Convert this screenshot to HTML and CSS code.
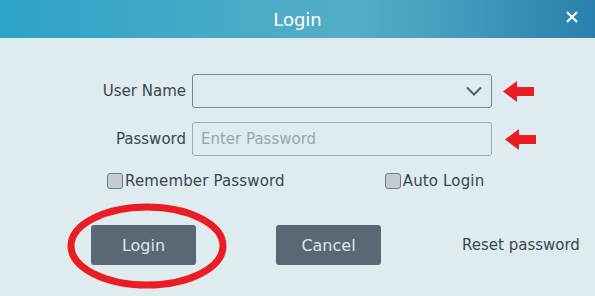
FILE: index.html
```html
<!DOCTYPE html>
<html>
<head>
<meta charset="utf-8">
<link rel="stylesheet" href="styles.css">
</head>
<body>
<div class="dialog">
  <header class="titlebar">
    <span class="title">Login</span>
    <span class="close">
      <svg width="12" height="12" viewBox="0 0 12 12"><path d="M1 1L11 11M11 1L1 11" stroke="#fff" stroke-width="2"/></svg>
    </span>
  </header>
  <main class="body">
    <div class="row row-user">
      <label class="label">User Name</label>
      <div class="input select">
        <svg class="chev" width="16" height="10" viewBox="0 0 16 10"><path d="M1 1.5L8 8.5L15 1.5" fill="none" stroke="#525e69" stroke-width="2"/></svg>
      </div>
      <svg class="arrow" width="31" height="21" viewBox="0 0 31 21"><path d="M0 10.5L14 0V6H31V15H14V21Z" fill="#ec1c24"/></svg>
    </div>
    <div class="row row-pass">
      <label class="label">Password</label>
      <div class="input pass"><span class="placeholder">Enter Password</span></div>
      <svg class="arrow arrow2" width="31" height="21" viewBox="0 0 31 21"><path d="M0 10.5L14 0V6H31V15H14V21Z" fill="#ec1c24"/></svg>
    </div>
    <div class="checks">
      <label class="check check-remember"><span class="box"></span>Remember Password</label>
      <label class="check check-auto"><span class="box"></span>Auto Login</label>
    </div>
    <div class="actions">
      <div class="btn-wrap">
        <button class="btn btn-login">Login</button>
        <svg class="ring" width="162" height="90" viewBox="0 0 162 90"><ellipse cx="81" cy="45" rx="76" ry="39" fill="none" stroke="#ec1c24" stroke-width="7"/></svg>
      </div>
      <button class="btn btn-cancel">Cancel</button>
      <span class="reset">Reset password</span>
    </div>
  </main>
</div>
</body>
</html>
```
FILE: styles.css
```css
html, body {
  margin: 0;
  padding: 0;
  background: #dfebef;
}
body {
  font-family: "DejaVu Sans", "Noto Sans", sans-serif;
  width: 595px;
  height: 296px;
  overflow: hidden;
}
.dialog {
  width: 595px;
  height: 296px;
  background: #deebef;
}
.titlebar {
  height: 38px;
  position: relative;
  display: flex;
  align-items: center;
  justify-content: center;
  background: linear-gradient(90deg, #2da2c7 0%, #45aac7 35%, #55aec6 60%, #3c96ba 82%, #2a80ac 100%);
}
.title {
  color: #ffffff;
  font-size: 18px;
}
.close {
  position: absolute;
  right: 17px;
  top: 11px;
  display: flex;
}
.body {
  padding-top: 36px;
}
.row {
  display: flex;
  align-items: center;
  height: 34px;
}
.row-pass {
  margin-top: 14px;
}
.label {
  width: 192px;
  flex: none;
  text-align: right;
  padding-right: 6px;
  box-sizing: border-box;
  font-size: 15px;
  color: #3b4650;
}
.input {
  width: 300px;
  height: 34px;
  box-sizing: border-box;
  border-radius: 3px;
  display: flex;
  align-items: center;
}
.select {
  border: 1px solid #7c8791;
  justify-content: flex-end;
  padding-right: 9px;
}
.pass {
  border: 1px solid #a3a8ab;
  padding-left: 8px;
}
.placeholder {
  font-size: 15px;
  color: #9ca6ad;
}
.arrow {
  margin-left: 11px;
}
.arrow2 {
  margin-left: 13px;
}
.checks {
  display: flex;
  align-items: center;
  margin-top: 15px;
  height: 20px;
}
.check {
  display: flex;
  align-items: center;
  font-size: 15px;
  color: #3b4650;
  letter-spacing: 0.15px;
}
.check-remember {
  margin-left: 107px;
}
.check-auto {
  margin-left: 100px;
}
.box {
  width: 14px;
  height: 14px;
  border: 1px solid #6f7b85;
  border-radius: 3px;
  background: #c3ccd3;
  margin-right: 2px;
}
.actions {
  display: flex;
  align-items: center;
  margin-top: 34px;
}
.btn-wrap {
  position: relative;
  margin-left: 91px;
  display: flex;
}
.btn {
  width: 105px;
  height: 40px;
  border: none;
  border-radius: 3px;
  background: #5a6874;
  color: #dfe5e9;
  font-family: "DejaVu Sans", "Noto Sans", sans-serif;
  font-size: 16px;
  padding: 0;
}
.btn-cancel {
  margin-left: 80px;
}
.ring {
  position: absolute;
  left: -25px;
  top: -24px;
  pointer-events: none;
}
.reset {
  margin-left: 81px;
  font-size: 15px;
  color: #3b4650;
}
```
